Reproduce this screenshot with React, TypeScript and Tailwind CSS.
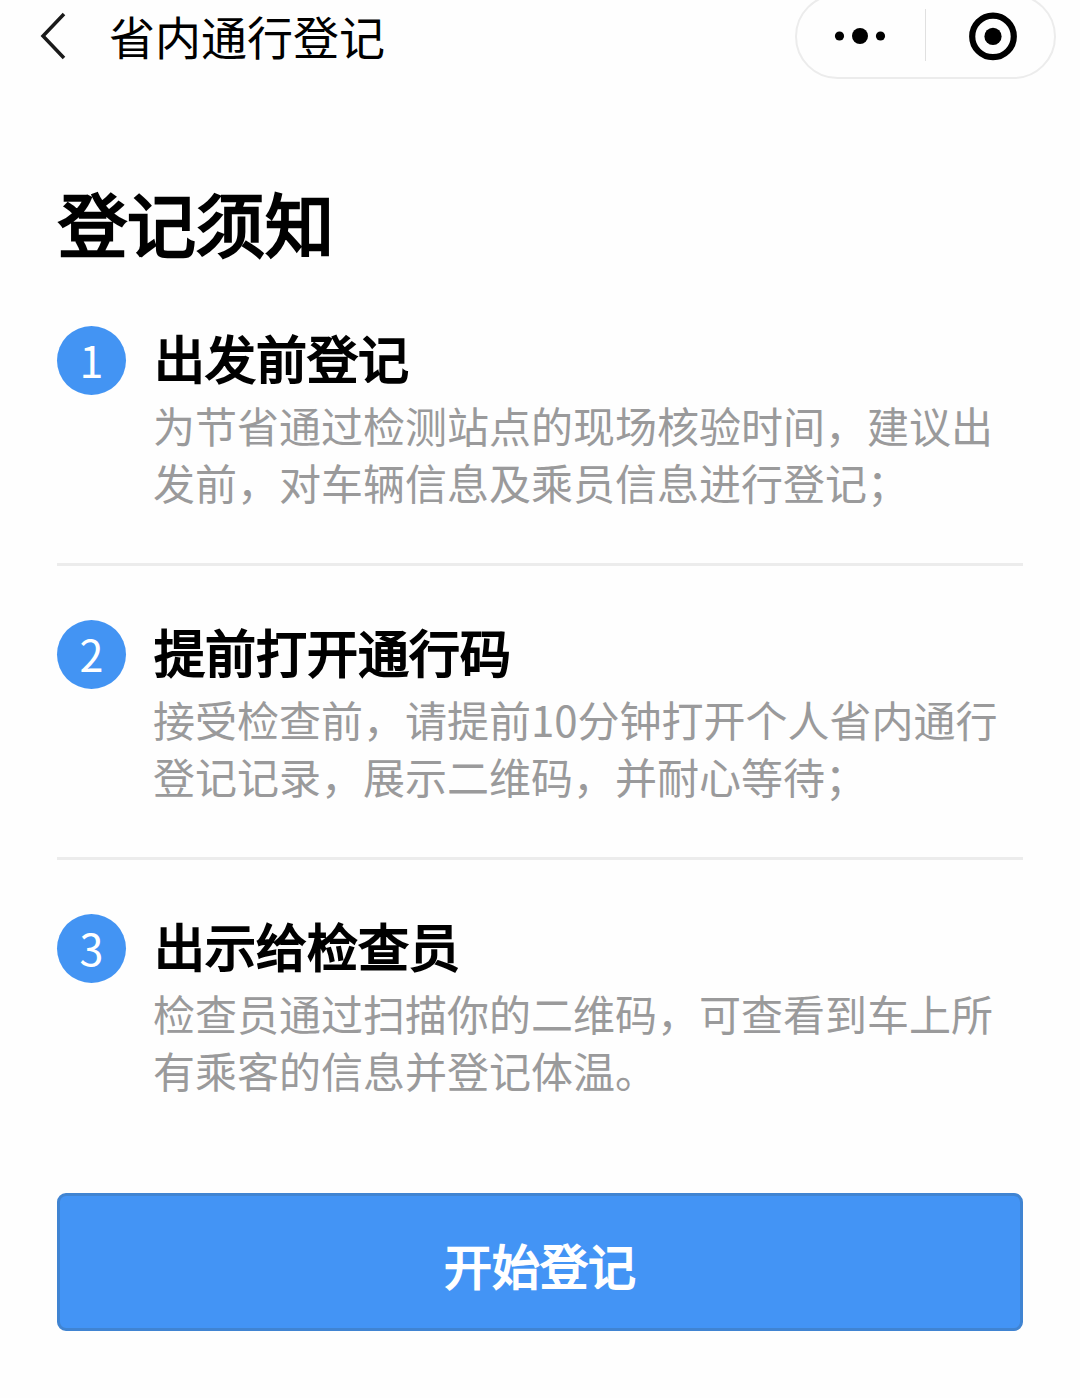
import React from "react";

type Step = { title: string; lines: string[] };

const steps: Step[] = [
  {
    title: "出发前登记",
    lines: ["为节省通过检测站点的现场核验时间，建议出", "发前，对车辆信息及乘员信息进行登记；"],
  },
  {
    title: "提前打开通行码",
    lines: ["接受检查前，请提前10分钟打开个人省内通行", "登记记录，展示二维码，并耐心等待；"],
  },
  {
    title: "出示给检查员",
    lines: ["检查员通过扫描你的二维码，可查看到车上所", "有乘客的信息并登记体温。"],
  },
];

function Header() {
  return (
    <header className="flex h-[79px] items-start justify-between pr-[24px] pl-[38px]">
      <div className="flex h-[72px] items-center">
        <svg width="30" height="50" viewBox="0 0 30 50" fill="none" stroke="#1a1a1a" strokeWidth="3.5">
          <path d="M26 3 L5 25 L26 47" />
        </svg>
        <h1 className="mb-[2px] ml-[41px] text-[46px] leading-[70px] font-normal whitespace-nowrap">省内通行登记</h1>
      </div>
      <div className="-mt-[6px] flex h-[85px] w-[261px] items-center rounded-full border-2 border-[#ececec]">
        <svg className="w-[128px] shrink-0" height="50" viewBox="0 0 128 50">
          <circle cx="42.5" cy="24" r="4.6" />
          <circle cx="63" cy="24" r="8" />
          <circle cx="83.5" cy="24" r="4.6" />
        </svg>
        <div className="mb-[3px] h-[52px] w-px shrink-0 bg-[#e0e0e0]" />
        <svg className="w-[128px] shrink-0" height="50" viewBox="0 0 128 50">
          <circle cx="67" cy="24.4" r="20.8" fill="none" stroke="#000" strokeWidth="6.2" />
          <circle cx="67" cy="24.4" r="8.6" />
        </svg>
      </div>
    </header>
  );
}

function StepItem({ step, index }: { step: Step; index: number }) {
  return (
    <li className="flex h-[294px] items-start">
      <span className="flex size-[69px] shrink-0 items-center justify-center rounded-full bg-[#4394f3] pb-[3px] text-[43px] leading-none text-white">
        {index + 1}
      </span>
      <div className={index < 2 ? "relative h-[240px] grow" : "grow"}>
        <h3 className="ml-[28px] text-[51px] leading-[62px] font-normal whitespace-nowrap [-webkit-text-stroke:2px_#000]">
          {step.title}
        </h3>
        <p className="mt-[8px] ml-[27px] text-[42px] leading-[57px] whitespace-nowrap text-[#9a9a9b]">
          {step.lines.map((line) => (
            <span key={line} className="block">{line}</span>
          ))}
        </p>
        {index < 2 && <div className="absolute bottom-0 -left-[69px] h-[3px] w-[966px] bg-[#ececec]" />}
      </div>
    </li>
  );
}

export default function App() {
  return (
    <div lang="zh-CN" className="h-[1398px] w-[1080px] overflow-hidden bg-[#fefefe] font-['Noto_Sans_CJK_SC',sans-serif] text-black">
      <Header />
      <main className="px-[57px]">
        <h2 className="mt-[93px] ml-px text-[69px] leading-[100px] font-normal [-webkit-text-stroke:2.6px_#000]">登记须知</h2>
        <ol className="mt-[54px]">
          {steps.map((step, index) => (
            <StepItem key={step.title} step={step} index={index} />
          ))}
        </ol>
        <button className="-mt-[15px] block h-[138px] w-full rounded-[9px] border-[3px] border-[#4084d2] bg-[#4394f5] pt-[4px] text-[48px] font-normal text-white [-webkit-text-stroke:1.8px_#fff]">
          开始登记
        </button>
      </main>
    </div>
  );
}
